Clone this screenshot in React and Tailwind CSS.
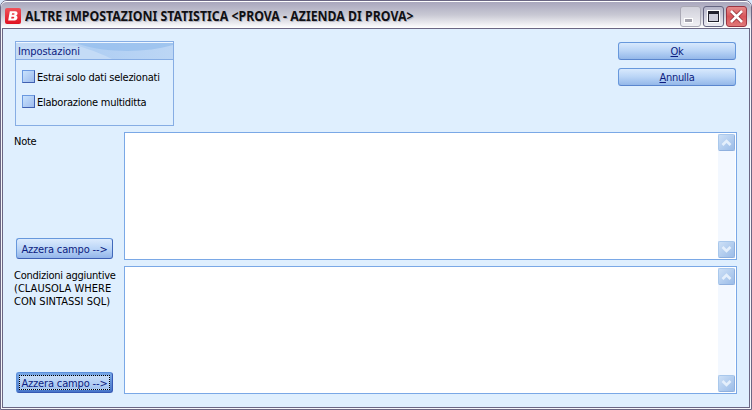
import React from "react";

function ActionButton({ children }) {
  return (
    <button
      type="button"
      className="flex h-[18px] w-[118px] items-center justify-center rounded-[3px] border border-[#6798dc] border-b-[#5a86ce] bg-linear-to-b from-[#d8e9fd] via-[#b9d4f6] to-[#94b8e9] tracking-[-0.3px] text-[#0c1c80]"
    >
      <span>{children}</span>
    </button>
  );
}

function ClearButton({ focused = false }) {
  return (
    <button
      type="button"
      className={`ml-[2px] flex h-[21px] w-[97px] rounded-[3px] border text-[#0c1c80] ${
        focused
          ? "border-[#5c90dc] border-r-[#3558b4] border-b-[#3558b4] bg-linear-to-b from-[#78a8e6] to-[#4674c8] p-[2px]"
          : "border-[#6798dc] border-r-[#4169bb] border-b-[#3d5fb4] bg-linear-to-b from-[#dcebfd] via-[#bcd6f7] to-[#94b6ea] p-[2px]"
      }`}
    >
      <span
        className={`flex h-full w-full items-center justify-center whitespace-nowrap ${
          focused
            ? "border border-dotted border-black bg-linear-to-b from-[#c6dcf8] to-[#a4c4f0]"
            : ""
        }`}
      >
        <span className="pt-px tracking-[-0.15px]">Azzera campo --&gt;</span>
      </span>
    </button>
  );
}

function CheckRow({ children }) {
  return (
    <label className="flex h-[13px] items-center gap-[2px]">
      <span className="h-[13px] w-[13px] shrink-0 border border-[#6a98e0] border-r-[#3f5fb0] border-b-[#3f5fb0] bg-linear-to-br from-[#c9e3fd] to-[#9dbbed]" />
      <span className="pt-[2px] whitespace-nowrap text-black">{children}</span>
    </label>
  );
}

function ScrollButton({ down = false }) {
  return (
    <span className="flex h-[17px] w-[17px] items-center justify-center rounded-[2px] border border-[#a9c8ec] border-r-[#8fb0de] border-b-[#8fb0de] bg-linear-to-br from-[#cde0f6] to-[#9bbce8]">
      <svg width="11" height="9" viewBox="0 0 11 9" fill="none" stroke="#e4effc" strokeWidth="2.6">
        <path d={down ? "M1.5 2 L5.5 6 L9.5 2" : "M1.5 7 L5.5 3 L9.5 7"} />
      </svg>
    </span>
  );
}

function Memo() {
  return (
    <div className="flex h-[128px] w-[613px] shrink-0 justify-end border border-[#7aa8e6] bg-white p-px">
      <div className="flex w-[17px] flex-col justify-between bg-[#f3f8ff]">
        <ScrollButton />
        <ScrollButton down />
      </div>
    </div>
  );
}

function Field({ label, detail, focused }) {
  return (
    <div className="flex h-[128px]">
      <div className="flex w-[110px] shrink-0 flex-col justify-between pt-[3px] pb-px">
        <p className="whitespace-pre text-black">
          {label}
          {detail && <span className="block tracking-[0.02px]">{detail}</span>}
        </p>
        <ClearButton focused={focused} />
      </div>
      <Memo />
    </div>
  );
}

export default function App() {
  return (
    <div className="h-[410px] w-[752px] overflow-hidden bg-[#d9e8fa] font-['DejaVu_Sans_Condensed','DejaVu_Sans',sans-serif] text-[11px] leading-[13px] tracking-[-0.25px]">
      <div className="flex h-full flex-col rounded-t-[7px] border border-[#6b6784] bg-[#f6f6fa]">
        <header className="flex h-[27px] shrink-0 items-center rounded-t-[6px] border-t border-white bg-linear-to-b from-[#a9a7bd] via-[#c9c9d4] to-white pr-[4px] pl-[4px]">
          <svg className="mt-[2px] shrink-0" width="16" height="16" viewBox="0 0 16 16">
            <defs>
              <linearGradient id="logo" x1="0" y1="0" x2="0" y2="1">
                <stop offset="0" stopColor="#f0525a" />
                <stop offset="1" stopColor="#e01020" />
              </linearGradient>
            </defs>
            <rect width="16" height="16" rx="2" fill="url(#logo)" />
            <path
              d="M4.8 3.2h5.4c3 0 3 3.6.8 4.3 2.5.7 1.8 5-1.3 5H3.2z M7.1 5.2l-.3 1.6h1.8c1.2 0 1.4-1.6.2-1.6z M6.5 8.8l-.3 1.8h2c1.3 0 1.4-1.8.2-1.8z"
              fill="#fff"
              fillRule="evenodd"
            />
          </svg>
          <h1 className="mt-px ml-[4px] w-[388px] origin-left scale-x-[0.88] font-['Noto_Sans',sans-serif] text-[14px] leading-[18px] font-bold tracking-normal whitespace-pre text-[#101014] [text-shadow:1px_1px_0_#b4b4be]">
            ALTRE IMPOSTAZIONI STATISTICA &lt;PROVA - AZIENDA DI PROVA&gt;
          </h1>
          <div className="mt-[2px] ml-auto flex gap-[2px]">
            <span className="flex h-[21px] w-[21px] rounded-[3px] border border-[#aaa9b5] bg-linear-to-b from-[#d0d0da] to-[#f0f0f4] pt-[11px] pl-[3px]">
              <span className="h-[5px] w-[9px] border border-white bg-[#a3a2ac]" />
            </span>
            <span className="flex h-[21px] w-[21px] items-center justify-center rounded-[3px] border border-[#656581] bg-linear-to-b from-[#b5b5c9] to-[#ececf2]">
              <svg width="13" height="13" viewBox="0 0 13 13" shapeRendering="crispEdges">
                <rect width="13" height="13" fill="#fff" />
                <path d="M1 1h11v11h-11z M2 4v7h9v-7z" fill="#22222c" fillRule="evenodd" />
                <rect x="2" y="4" width="9" height="7" fill="#cfcfdb" />
              </svg>
            </span>
            <span className="flex h-[21px] w-[21px] items-center justify-center rounded-[3px] border border-[#9b3441] bg-linear-to-b from-[#e48a8a] via-[#d9555a] to-[#e07878]">
              <svg width="15" height="15" viewBox="0 0 15 15">
                <path d="M2.5 2.5l10 10M12.5 2.5l-10 10" stroke="#8c2830" strokeWidth="4" />
                <path d="M2 2l11 11M13 2l-11 11" stroke="#fff" strokeWidth="2.6" />
              </svg>
            </span>
          </div>
        </header>

        <main className="mx-px mb-px flex grow flex-col border border-[#6b6784] bg-[#dfeffe] pt-[12px] pl-[11px]">
          <div className="flex h-[91px] shrink-0 justify-between pl-px">
            <section className="h-[85px] w-[159px] border border-[#86ade4]">
              <h2 className="h-[18px] overflow-hidden border-b border-[#86ade4] bg-[#c9dff8]">
                <span className="relative block h-full">
                  <svg className="absolute inset-0" width="157" height="17" viewBox="0 0 157 17">
                    <defs>
                      <linearGradient id="cap" x1="0" x2="1" y1="0" y2="0">
                        <stop offset="0" stopColor="#c4dbf6" />
                        <stop offset="0.5" stopColor="#b0cff3" />
                        <stop offset="1" stopColor="#bcd6f5" />
                      </linearGradient>
                    </defs>
                    <rect width="157" height="17" fill="#c4dbf6" />
                    <path d="M0 1H157V17H96C88 13 76 8 62 4C40 2 20 3 0 5Z" fill="url(#cap)" />
                    <path d="M62 2C90 11 130 11 157 3V1H62Z" fill="#94bdec" opacity="0.7" />
                    <rect width="157" height="1" fill="#eef6ff" />
                  </svg>
                  <span className="relative block pt-[3px] pl-[2px] tracking-[-0.1px] text-[#0c1c80]">Impostazioni</span>
                </span>
              </h2>
              <div className="flex flex-col gap-[12px] pt-[10px] pl-[6px]">
                <CheckRow>Estrai solo dati selezionati</CheckRow>
                <CheckRow>Elaborazione multiditta</CheckRow>
              </div>
            </section>
            <div className="mr-[13px] flex flex-col gap-[8px] pt-px">
              <ActionButton>
                <u>O</u>k
              </ActionButton>
              <ActionButton>
                <u>A</u>nnulla
              </ActionButton>
            </div>
          </div>
          <div className="flex flex-col gap-[6px]">
            <Field label="Note" />
            <Field label="Condizioni aggiuntive" detail={"(CLAUSOLA WHERE\nCON SINTASSI SQL)"} focused />
          </div>
        </main>
      </div>
    </div>
  );
}
